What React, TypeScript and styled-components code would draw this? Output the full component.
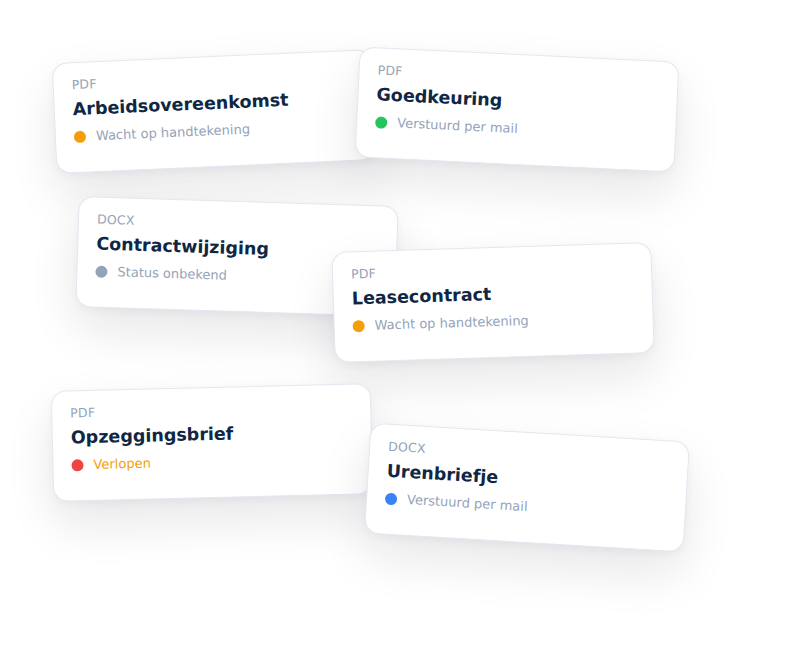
import React from 'react';
import styled, { createGlobalStyle } from 'styled-components';

const GlobalStyle = createGlobalStyle`
  html, body {
    margin: 0;
    padding: 0;
    background: #ffffff;
  }
  body {
    font-family: "DejaVu Sans", "Noto Sans", sans-serif;
  }
`;

type Status = 'pending' | 'mailed' | 'unknown' | 'expired' | 'mailedBlue';

const dotColors: Record<Status, string> = {
  pending: '#f59e0b',
  mailed: '#22c55e',
  unknown: '#94a3b8',
  expired: '#ef4444',
  mailedBlue: '#3b82f6',
};

type DocCard = {
  kind: string;
  title: string;
  status: string;
  state: Status;
  cx: number;
  cy: number;
  angle: number;
  warn?: boolean;
};

const CARD_W = 320;
const CARD_H = 111;

const docs: DocCard[] = [
  { kind: 'PDF', title: 'Arbeidsovereenkomst', status: 'Wacht op handtekening', state: 'pending', cx: 214, cy: 111, angle: -2.5 },
  { kind: 'PDF', title: 'Goedkeuring', status: 'Verstuurd per mail', state: 'mailed', cx: 517, cy: 109, angle: 2.7 },
  { kind: 'DOCX', title: 'Contractwijziging', status: 'Status onbekend', state: 'unknown', cx: 237, cy: 256, angle: 1.8 },
  { kind: 'PDF', title: 'Leasecontract', status: 'Wacht op handtekening', state: 'pending', cx: 493, cy: 302, angle: -1.8 },
  { kind: 'PDF', title: 'Opzeggingsbrief', status: 'Verlopen', state: 'expired', cx: 212, cy: 442, angle: -1.4, warn: true },
  { kind: 'DOCX', title: 'Urenbriefje', status: 'Verstuurd per mail', state: 'mailedBlue', cx: 527, cy: 487, angle: 3.4 },
];

const Board = styled.div`
  position: relative;
  width: 800px;
  height: 672px;
  overflow: hidden;
  background: #ffffff;
`;

const Card = styled.div<{ $x: number; $y: number; $angle: number }>`
  position: absolute;
  left: ${(p) => p.$x - CARD_W / 2}px;
  top: ${(p) => p.$y - CARD_H / 2}px;
  width: ${CARD_W}px;
  height: ${CARD_H}px;
  box-sizing: border-box;
  padding: 14px 18px;
  background: #ffffff;
  border: 1px solid #e2e8f0;
  border-radius: 15px;
  box-shadow: 0 22px 48px rgba(15, 23, 42, 0.1), 0 3px 8px rgba(15, 23, 42, 0.04);
  transform: rotate(${(p) => p.$angle}deg);
  display: flex;
  flex-direction: column;
`;

const Kind = styled.div`
  font-size: 12.5px;
  color: #94a3b8;
  letter-spacing: 0.2px;
`;

const Title = styled.div`
  margin-top: 7px;
  font-size: 17.5px;
  font-weight: 700;
  color: #0f2744;
`;

const StatusRow = styled.div`
  margin-top: 10px;
  display: flex;
  align-items: center;
  gap: 10px;
`;

const Dot = styled.span<{ $state: Status }>`
  width: 12px;
  height: 12px;
  border-radius: 50%;
  flex: none;
  background: ${(p) => dotColors[p.$state]};
`;

const StatusText = styled.span<{ $warn?: boolean }>`
  font-size: 13px;
  color: ${(p) => (p.$warn ? '#f59e0b' : '#94a3b8')};
`;

export default function App() {
  return (
    <>
      <GlobalStyle />
      <Board>
        {docs.map((d) => (
          <Card key={d.title} $x={d.cx} $y={d.cy} $angle={d.angle}>
            <Kind>{d.kind}</Kind>
            <Title>{d.title}</Title>
            <StatusRow>
              <Dot $state={d.state} />
              <StatusText $warn={d.warn}>{d.status}</StatusText>
            </StatusRow>
          </Card>
        ))}
      </Board>
    </>
  );
}
